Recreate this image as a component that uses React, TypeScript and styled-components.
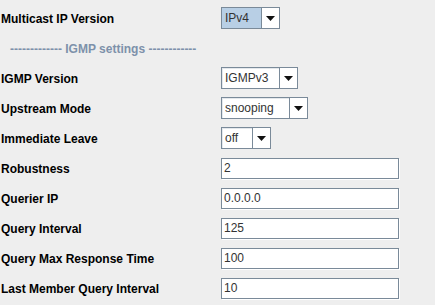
import React from "react";
import styled, {createGlobalStyle} from "styled-components";

const GlobalStyle = createGlobalStyle`
  html, body {
    margin: 0;
    padding: 0;
    background: #eeeeee;
  }
  body {
    font-family: "Liberation Sans", Arial, sans-serif;
  }
`

type ComboProps = { value: string, width: number, selected?: boolean }

const Combo = ({value, width, selected}: ComboProps) => (
    <ComboBox>
        <ComboValue $width={width} $selected={selected}>{value}</ComboValue>
        <ArrowButton>
            <svg width="9" height="5" viewBox="0 0 9 5">
                <path d="M0 0 H9 L4.5 5 Z" fill="#111"/>
            </svg>
        </ArrowButton>
    </ComboBox>
)

const textRows = [
    {label: "Robustness", value: "2"},
    {label: "Querier IP", value: "0.0.0.0"},
    {label: "Query Interval", value: "125"},
    {label: "Query Max Response Time", value: "100"},
    {label: "Last Member Query Interval", value: "10"},
]

export default function App() {
    return (
        <>
            <GlobalStyle/>
            <Form>
                <Row>
                    <Label>Multicast IP Version</Label>
                    <Combo value="IPv4" width={41} selected/>
                </Row>
                <Row>
                    <Separator>------------- IGMP settings ------------</Separator>
                </Row>
                <Row>
                    <Label>IGMP Version</Label>
                    <Combo value="IGMPv3" width={59}/>
                </Row>
                <Row>
                    <Label>Upstream Mode</Label>
                    <Combo value="snooping" width={69}/>
                </Row>
                <Row>
                    <Label>Immediate Leave</Label>
                    <Combo value="off" width={32}/>
                </Row>
                {textRows.map(r => (
                    <Row key={r.label}>
                        <Label>{r.label}</Label>
                        <TextField>{r.value}</TextField>
                    </Row>
                ))}
            </Form>
        </>
    )
}

const Form = styled.div`
  display: flex;
  flex-direction: column;
  padding-top: 3px;
  width: 435px;
  height: 305px;
  box-sizing: border-box;
  overflow: hidden;
`
const Row = styled.div`
  display: grid;
  grid-template-columns: 221px 1fr;
  align-items: center;
  height: 30px;
`
const Label = styled.span`
  padding-left: 1px;
  padding-top: 2px;
  font-weight: bold;
  font-size: 12px;
  color: #000;
`
const Separator = styled.span`
  grid-column: 1 / span 2;
  padding-left: 10px;
  padding-top: 2px;
  font-weight: bold;
  font-size: 12px;
  color: #7d91aa;
`
const ComboBox = styled.div`
  display: flex;
  height: 22px;
`
const ComboValue = styled.div<{ $width: number, $selected?: boolean }>`
  width: ${p => p.$width}px;
  box-sizing: border-box;
  border: 1px solid #7a8a99;
  background: ${p => p.$selected ? "#b8cfe5" : "#ffffff"};
  box-shadow: inset 1px 1px 0 ${p => p.$selected ? "#b8cfe5" : "#e4e8ec"};
  display: flex;
  align-items: center;
  padding-left: 3px;
  font-size: 12px;
  color: #333333;
`
const ArrowButton = styled.div`
  width: 18px;
  box-sizing: border-box;
  border: 1px solid #7a8a99;
  border-left: none;
  background: #ffffff;
  display: flex;
  align-items: center;
  justify-content: center;
`
const TextField = styled.div`
  width: 178px;
  height: 21px;
  box-sizing: border-box;
  border: 1px solid #7a8a99;
  background: #ffffff;
  box-shadow: 1px 1px 0 #ffffff;
  display: flex;
  align-items: center;
  padding-left: 2px;
  font-size: 12px;
  color: #333333;
`
